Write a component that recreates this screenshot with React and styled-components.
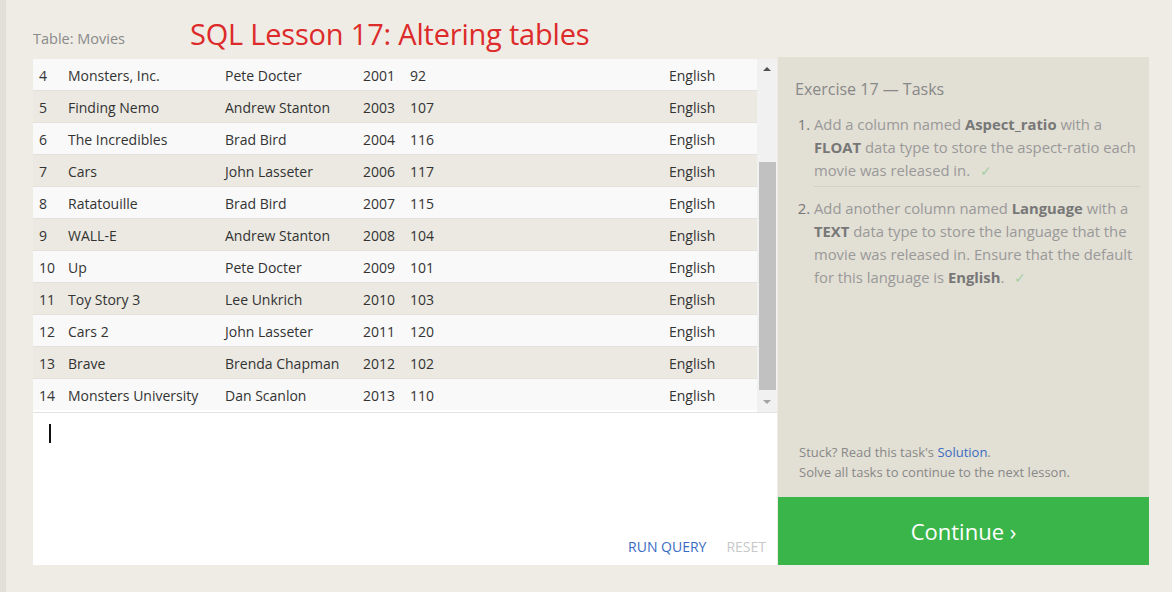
import React from 'react'
import styled, { createGlobalStyle } from 'styled-components'

const GlobalStyle = createGlobalStyle`
    html, body {
        margin:0;
        padding:0;
        background:#efece5;
        font-family:"Open Sans", "Noto Sans", sans-serif;
    }
`

const movies = [
    [4, 'Monsters, Inc.', 'Pete Docter', 2001, 92],
    [5, 'Finding Nemo', 'Andrew Stanton', 2003, 107],
    [6, 'The Incredibles', 'Brad Bird', 2004, 116],
    [7, 'Cars', 'John Lasseter', 2006, 117],
    [8, 'Ratatouille', 'Brad Bird', 2007, 115],
    [9, 'WALL-E', 'Andrew Stanton', 2008, 104],
    [10, 'Up', 'Pete Docter', 2009, 101],
    [11, 'Toy Story 3', 'Lee Unkrich', 2010, 103],
    [12, 'Cars 2', 'John Lasseter', 2011, 120],
    [13, 'Brave', 'Brenda Chapman', 2012, 102],
    [14, 'Monsters University', 'Dan Scanlon', 2013, 110],
]

function App() {
    return (
        <Page>
            <GlobalStyle />
            <Header>
                <TableLabel>Table: Movies</TableLabel>
                <Title>SQL Lesson 17: Altering tables</Title>
            </Header>
            <Main>
                <Workspace>
                    <TableArea>
                        <Rows>
                            {movies.map((m, i) => (
                                <Row key={m[0]} $even={i % 2 === 1}>
                                    <Cell>{m[0]}</Cell>
                                    <Cell>{m[1]}</Cell>
                                    <Cell>{m[2]}</Cell>
                                    <Cell>{m[3]}</Cell>
                                    <Cell>{m[4]}</Cell>
                                    <Cell>English</Cell>
                                </Row>
                            ))}
                        </Rows>
                        <Scrollbar>
                            <Arrow $up />
                            <Track>
                                <Thumb />
                            </Track>
                            <Arrow />
                        </Scrollbar>
                    </TableArea>
                    <Editor>
                        <Caret />
                        <EditorActions>
                            <ActionButton>RUN QUERY</ActionButton>
                            <ActionButton $disabled>RESET</ActionButton>
                        </EditorActions>
                    </Editor>
                </Workspace>
                <Sidebar>
                    <Tasks>
                        <TasksTitle>Exercise 17 — Tasks</TasksTitle>
                        <TaskList>
                            <Task>
                                Add a column named <b>Aspect_ratio</b> with a <b>FLOAT</b> data type to store the aspect-ratio each movie was released in.
                                <Check>✓</Check>
                            </Task>
                            <Task>
                                Add another column named <b>Language</b> with a <b>TEXT</b> data type to store the language that the movie was released in. Ensure that the default for this language is <b>English</b>.
                                <Check>✓</Check>
                            </Task>
                        </TaskList>
                    </Tasks>
                    <Hint>
                        Stuck? Read this task's <HintLink>Solution</HintLink>.<br />
                        Solve all tasks to continue to the next lesson.
                    </Hint>
                    <ContinueButton>Continue ›</ContinueButton>
                </Sidebar>
            </Main>
        </Page>
    )
}

export default App

const Page = styled.div`
    min-height:592px;
    box-sizing:border-box;
    border-left:6px solid #e2dfd9;
    padding:0 23px 0 27px;
`

const Header = styled.div`
    height:57px;
    display:flex;
    align-items:flex-end;
    box-sizing:border-box;
`

const TableLabel = styled.div`
    font-size:14.5px;
    color:#8a8a8a;
    width:157px;
    padding-bottom:9px;
`

const Title = styled.h1`
    margin:0;
    font-size:29px;
    font-weight:400;
    color:#dd2a2a;
    padding-bottom:4px;
    letter-spacing:-0.2px;
`

const Main = styled.div`
    display:flex;
    height:508px;
`

const Workspace = styled.div`
    width:744px;
    margin-top:2px;
    background:#fff;
    display:flex;
    flex-direction:column;
`

const TableArea = styled.div`
    display:flex;
    height:353px;
    border-bottom:1px solid #e4e2dc;
`

const Rows = styled.div`
    flex:1;
    overflow:hidden;
`

const Row = styled.div`
    display:grid;
    grid-template-columns:29px 157px 138px 47px 259px 1fr;
    height:29px;
    align-items:center;
    padding:2px 0 0 6px;
    border-bottom:1px solid #e4e2dc;
    background:${p => (p.$even ? '#ebe9e2' : '#f9f9f9')};
    font-size:14px;
    color:#333;
    &:last-child{
        border-bottom:none;
    }
`

const Cell = styled.div`
    white-space:nowrap;
`

const Scrollbar = styled.div`
    width:20px;
    background:#f1f1f1;
    display:flex;
    flex-direction:column;
    align-items:center;
`

const Arrow = styled.div`
    height:20px;
    width:20px;
    display:flex;
    align-items:center;
    justify-content:center;
    &:before{
        content:"";
        border-left:4px solid transparent;
        border-right:4px solid transparent;
        ${p => (p.$up
            ? 'border-bottom:4px solid #505050;'
            : 'border-top:4px solid #a3a3a3;')}
    }
`

const Track = styled.div`
    flex:1;
    width:100%;
    display:flex;
    flex-direction:column;
    justify-content:flex-end;
    padding:0 1px 2px 2px;
    box-sizing:border-box;
`

const Thumb = styled.div`
    height:228px;
    background:#c1c1c1;
`

const Editor = styled.div`
    flex:1;
    display:flex;
    flex-direction:column;
    justify-content:space-between;
    padding:11px 11px 9px 16px;
`

const Caret = styled.div`
    width:2px;
    height:19px;
    background:#111;
`

const EditorActions = styled.div`
    display:flex;
    justify-content:flex-end;
    gap:20px;
`

const ActionButton = styled.span`
    font-size:14px;
    color:${p => (p.$disabled ? '#c8c8c8' : '#3a6bc2')};
    cursor:pointer;
`

const Sidebar = styled.div`
    width:371px;
    margin-left:1px;
    background:#e2dfd4;
    display:flex;
    flex-direction:column;
`

const Tasks = styled.div`
    flex:1;
    padding:21px 5px 0 17px;
`

const TasksTitle = styled.div`
    font-size:16px;
    color:#888;
    margin-bottom:13px;
`

const TaskList = styled.ol`
    margin:0;
    padding-left:19px;
    color:#999;
    font-size:14.8px;
    line-height:23px;
    b{
        color:#777;
        font-weight:700;
    }
    li::marker{
        color:#777;
    }
`

const Task = styled.li`
    padding:0 0 4px;
    margin-right:4px;
    & + &{
        border-top:1px solid #d3d0c6;
        padding-top:10px;
    }
`

const Check = styled.span`
    color:#a4d0a4;
    margin-left:10px;
    font-size:14px;
`

const Hint = styled.div`
    padding:0 0 15px 21px;
    font-size:13px;
    line-height:20px;
    color:#888;
`

const HintLink = styled.a`
    color:#3a6bc2;
`

const ContinueButton = styled.div`
    height:68px;
    background:#3ab54a;
    color:#fff;
    font-size:22px;
    display:flex;
    align-items:center;
    justify-content:center;
    cursor:pointer;
`
